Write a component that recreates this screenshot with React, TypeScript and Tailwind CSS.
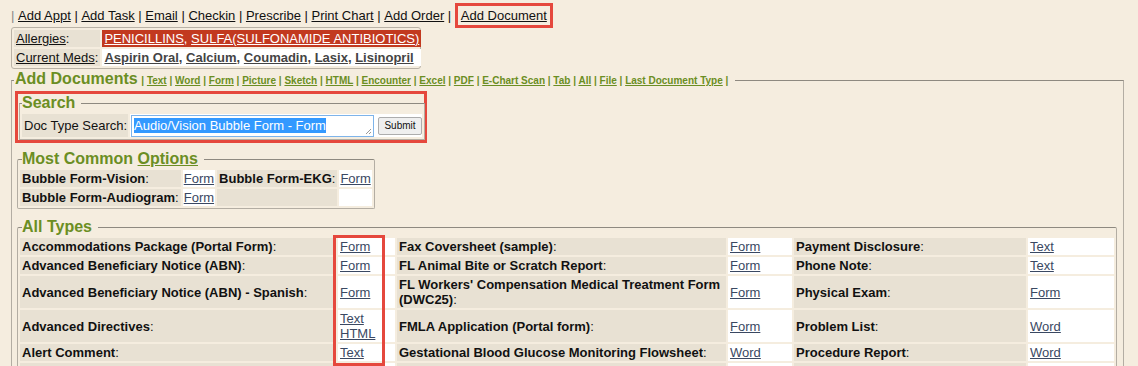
import React from "react";

const navLinks = ["Add Appt", "Add Task", "Email", "Checkin", "Prescribe", "Print Chart", "Add Order"];

const docLinks = [
  "Text", "Word", "Form", "Picture", "Sketch", "HTML", "Encounter", "Excel", "PDF",
  "E-Chart Scan", "Tab", "All", "File", "Last Document Type",
];

const rows: [string, string[], string, string[], string, string[]][] = [
  ["Accommodations Package (Portal Form)", ["Form"], "Fax Coversheet (sample)", ["Form"], "Payment Disclosure", ["Text"]],
  ["Advanced Beneficiary Notice (ABN)", ["Form"], "FL Animal Bite or Scratch Report", ["Form"], "Phone Note", ["Text"]],
  ["Advanced Beneficiary Notice (ABN) - Spanish", ["Form"], "FL Workers' Compensation Medical Treatment Form (DWC25)", ["Form"], "Physical Exam", ["Form"]],
  ["Advanced Directives", ["Text", "HTML"], "FMLA Application (Portal form)", ["Form"], "Problem List", ["Word"]],
  ["Alert Comment", ["Text"], "Gestational Blood Glucose Monitoring Flowsheet", ["Word"], "Procedure Report", ["Word"]],
  ["Allergy List", ["Text"], "Growth Chart", ["Form"], "Progress Note", ["Word"]],
];

function Label({ name }: { name: string }) {
  return (
    <td className="bg-[#e8e1d3] px-[2px] py-[1px] align-middle">
      <b>{name}</b>:
    </td>
  );
}

function Links({ items }: { items: string[] }) {
  return (
    <td className="bg-white px-[2px] py-[1px] align-middle">
      {items.map((l) => (
        <div key={l}>
          <a className="text-[#3a4862] underline">{l}</a>
        </div>
      ))}
    </td>
  );
}

export default function App() {
  return (
    <div className="relative h-[366px] w-[1138px] overflow-hidden bg-[#f5eddf] font-['Liberation_Sans',Arial,sans-serif] text-[13px] leading-[15px] text-[#111]">
      {/* Top action bar */}
      <div className="ml-[11px] mt-[4px] flex h-[23px] items-center whitespace-pre">
        <span className="text-[#888]">| </span>
        {navLinks.map((l) => (
          <React.Fragment key={l}>
            <a className="underline">{l}</a>
            <span> | </span>
          </React.Fragment>
        ))}
        <span className="inline-flex h-[25px] items-center border-[3px] border-[#e5483d] px-[3px]">
          <a className="underline">Add Document</a>
        </span>
      </div>

      {/* Allergies / meds */}
      <div className="ml-[11px] w-[410px] whitespace-nowrap rounded-[3px] border border-[#b9b2a6]">
        <table className="w-full border-separate border-spacing-[2px]">
          <tbody>
            <tr className="h-[17px]">
              <td className="w-[85px] bg-[#e8e1d3] px-[2px]">
                <a className="underline">Allergies</a>:
              </td>
              <td className="bg-[#c2391f] px-[2px] text-white">
                <a className="underline">PENICILLINS</a>, <a className="underline">SULFA(SULFONAMIDE ANTIBIOTICS)</a>
              </td>
            </tr>
            <tr className="h-[17px]">
              <td className="bg-[#e8e1d3] px-[2px]">
                <a className="underline">Current Meds</a>:
              </td>
              <td className="bg-white px-[2px] font-bold text-[#444]">
                <a className="underline">Aspirin Oral</a>, <a className="underline">Calcium</a>,{" "}
                <a className="underline">Coumadin</a>, <a className="underline">Lasix</a>,{" "}
                <a className="underline">Lisinopril</a>
              </td>
            </tr>
          </tbody>
        </table>
      </div>

      {/* Add Documents */}
      <fieldset className="ml-[11px] mt-[1px] w-[1113px] border border-[#b3ada3] border-t-[#8e8980] px-[2px] pb-[20px]">
        <legend className="whitespace-nowrap pl-[1px] pr-[7px] leading-[18px] text-[#6b8e23]">
          <span className="text-[16px] font-bold">Add Documents</span>{" "}
          <span className="text-[10px] font-bold">
            {docLinks.map((l) => (
              <React.Fragment key={l}>
                | <a className="underline">{l}</a>{" "}
              </React.Fragment>
            ))}
            |
          </span>
        </legend>

        {/* Search */}
        <div className="ml-[1px] mt-[1px] w-[412px] whitespace-nowrap border-[3px] border-[#e5483d] px-[1px]">
          <fieldset className="border border-[#b3ada3] border-t-[#8e8980] px-[1px] pb-[1px]">
            <legend className="ml-[1px] pr-[6px] text-[16px] font-bold leading-[18px] text-[#6b8e23]">Search</legend>
            <div className="mt-[1px] flex gap-[2px] p-[1px]">
              <div className="flex h-[23px] w-[106px] shrink-0 items-center bg-[#e8e1d3] px-[2px]">Doc Type Search:</div>
              <div className="flex flex-1 items-center gap-[4px] bg-white pl-[1px]">
                <div className="relative flex h-[22px] w-[243px] items-center border border-[#7eb4ea] bg-white pl-[2px]">
                  <span className="bg-[#3399ff] text-white">Audio/Vision Bubble Form - Form</span>
                  <svg className="absolute bottom-[1px] right-[1px]" width="7" height="7" viewBox="0 0 7 7">
                    <path d="M6 1L1 6M6 4L4 6" stroke="#999" strokeWidth="1" />
                  </svg>
                </div>
                <button className="h-[18px] w-[44px] rounded-[2px] border border-[#adadad] bg-[#efefef] text-[10px] leading-[14px] text-[#111]">
                  Submit
                </button>
              </div>
            </div>
          </fieldset>
        </div>

        {/* Most Common Options */}
        <fieldset className="ml-[3px] mt-[7px] w-[357px] whitespace-nowrap rounded-[2px] border border-[#b3ada3] border-t-[#8e8980]">
          <legend className="ml-[4px] pr-[6px] text-[16px] font-bold leading-[18px] text-[#6b8e23]">
            Most Common <a className="underline">Options</a>
          </legend>
          <table className="border-separate border-spacing-[2px]">
            <tbody>
              <tr className="h-[17px]">
                <td className="w-[159px] bg-[#e8e1d3] px-[2px]"><b>Bubble Form-Vision</b>:</td>
                <td className="w-[31px] bg-white px-[1px]"><a className="text-[#3a4862] underline">Form</a></td>
                <td className="w-[120px] bg-[#e8e1d3] px-[2px]"><b>Bubble Form-EKG</b>:</td>
                <td className="w-[31px] bg-white px-[1px]"><a className="text-[#3a4862] underline">Form</a></td>
              </tr>
              <tr className="h-[17px]">
                <td className="bg-[#e8e1d3] px-[2px]"><b>Bubble Form-Audiogram</b>:</td>
                <td className="bg-white px-[1px]"><a className="text-[#3a4862] underline">Form</a></td>
                <td className="bg-[#e8e1d3]"></td>
                <td className="bg-white"></td>
              </tr>
            </tbody>
          </table>
        </fieldset>

        {/* All Types */}
        <fieldset className="ml-[3px] mt-[9px] w-[1100px] rounded-[2px] border border-[#b3ada3] border-t-[#8e8980]">
          <legend className="ml-[4px] pr-[6px] text-[16px] font-bold leading-[18px] text-[#6b8e23]">All Types</legend>
          <table className="w-full table-fixed border-separate border-spacing-[2px]">
            <colgroup>
              <col className="w-[316px]" />
              <col className="w-[57px]" />
              <col className="w-[329px]" />
              <col className="w-[64px]" />
              <col className="w-[232px]" />
              <col className="w-[86px]" />
            </colgroup>
            <tbody>
              {rows.map((r) => (
                <tr key={r[0]}>
                  <Label name={r[0]} />
                  <Links items={r[1]} />
                  <Label name={r[2]} />
                  <Links items={r[3]} />
                  <Label name={r[4]} />
                  <Links items={r[5]} />
                </tr>
              ))}
            </tbody>
          </table>
        </fieldset>
      </fieldset>

      {/* highlight around the first link column */}
      <div className="absolute left-[333px] top-[235px] h-[131px] w-[52px] border-[3px] border-[#e5483d]" />
    </div>
  );
}
